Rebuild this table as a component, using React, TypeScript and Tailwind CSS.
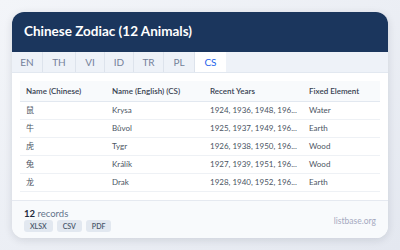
import React from 'react';

const tabs = [
  { t: 'EN', w: 'w-[31px]' },
  { t: 'TH', w: 'w-[33px]' },
  { t: 'VI', w: 'w-[29px]' },
  { t: 'ID', w: 'w-[29px]' },
  { t: 'TR', w: 'w-[30px]' },
  { t: 'PL', w: 'w-[31px]' },
  { t: 'CS', w: 'w-[31px]' },
];

const rows = [
  { zh: '鼠', en: 'Krysa', years: '1924, 1936, 1948, 196...', el: 'Water' },
  { zh: '牛', en: 'Bůvol', years: '1925, 1937, 1949, 196...', el: 'Earth' },
  { zh: '虎', en: 'Tygr', years: '1926, 1938, 1950, 196...', el: 'Wood' },
  { zh: '兔', en: 'Králík', years: '1927, 1939, 1951, 196...', el: 'Wood' },
  { zh: '龙', en: 'Drak', years: '1928, 1940, 1952, 196...', el: 'Earth' },
];

export default function App() {
  return (
    <div
      className="w-[400px] h-[250px] bg-gradient-to-br from-[#f3f5f9] to-[#e4e8f0] p-3"
      style={{ fontFamily: 'Lato, "Noto Sans", "Noto Sans CJK SC", sans-serif' }}
    >
      <div className="h-[226px] rounded-xl bg-white shadow-[0_2px_8px_rgba(15,23,42,0.12)] overflow-hidden flex flex-col">
        {/* Header */}
        <div className="h-10 bg-[#1b365d] flex items-center px-3">
          <h1 className="text-white text-[13.5px] font-bold leading-none">Chinese Zodiac (12 Animals)</h1>
        </div>

        {/* Tabs */}
        <div className="flex h-[21px] bg-[#eef2f8] border-b border-[#e2e8f0]">
          {tabs.map(({ t, w }) =>
            t === 'CS' ? (
              <div key={t} className={`${w} flex items-center justify-center text-[10px] text-[#2563eb] bg-white`}>
                {t}
              </div>
            ) : (
              <div
                key={t}
                className={`${w} flex items-center justify-center text-[10px] text-[#75819a] border-r border-[#dde3ec]`}
              >
                {t}
              </div>
            )
          )}
        </div>

        {/* Table */}
        <div className="px-2 pt-[8px] flex-1">
          <table className="w-full border-collapse text-[8px]">
            <thead>
              <tr className="bg-[#f8fafc] border-b border-[#e2e8f0] h-[20px]">
                <th className="text-left font-semibold text-[#374151] pl-[6px] w-[92px]">Name (Chinese)</th>
                <th className="text-left font-semibold text-[#374151] w-[98px]">Name (English) (CS)</th>
                <th className="text-left font-semibold text-[#374151] w-[99px]">Recent Years</th>
                <th className="text-left font-semibold text-[#374151]">Fixed Element</th>
              </tr>
            </thead>
            <tbody>
              {rows.map((r) => (
                <tr key={r.zh} className="border-b border-[#eef1f5] h-[18px] text-[#4b5563]">
                  <td className="pl-[6px]">{r.zh}</td>
                  <td>{r.en}</td>
                  <td>{r.years}</td>
                  <td>{r.el}</td>
                </tr>
              ))}
            </tbody>
          </table>
        </div>

        {/* Footer */}
        <div className="h-[38px] bg-[#f8fafc] border-t border-[#e5e9f0] px-3 flex items-end justify-between pb-[6px]">
          <div className="flex flex-col gap-[2px]">
            <div className="text-[9.5px] text-[#64748b] leading-none">
              <span className="font-bold text-[#1e293b]">12</span> records
            </div>
            <div className="flex gap-[4px]">
              {['XLSX', 'CSV', 'PDF'].map((b) => (
                <span
                  key={b}
                  className="bg-[#e2e8f0] text-[#475569] text-[7px] font-semibold rounded-[3px] px-[6px] h-[12px] flex items-center"
                >
                  {b}
                </span>
              ))}
            </div>
          </div>
          <div className="text-[8.5px] text-[#a5a9c0] mb-[4px]">listbase.org</div>
        </div>
      </div>
    </div>
  );
}
